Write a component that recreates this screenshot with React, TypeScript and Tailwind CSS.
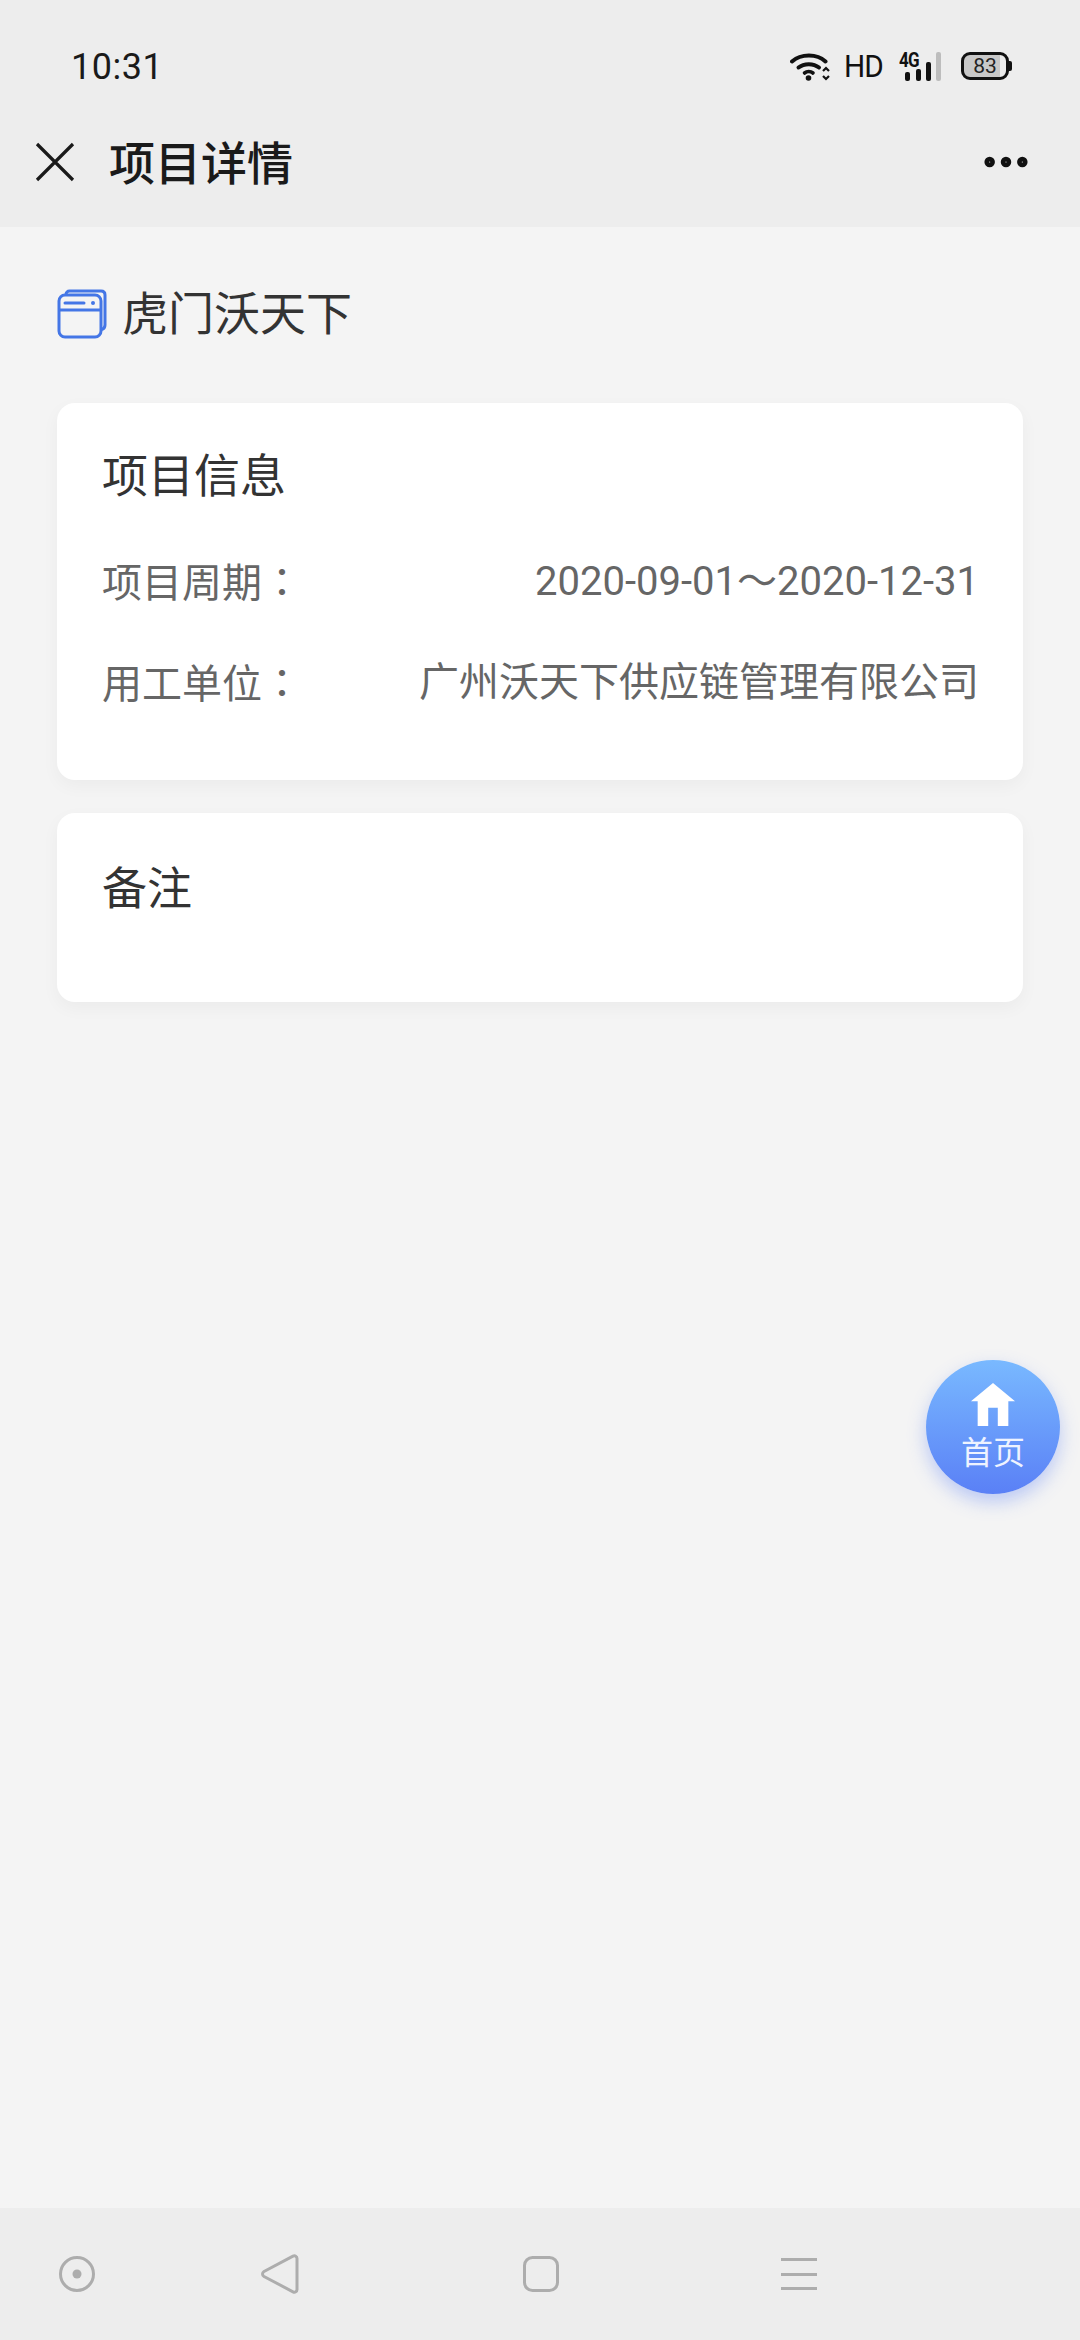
import { MoreHorizontal } from "lucide-react";

const cjk = "font-['Roboto','Noto_Sans_CJK_SC',sans-serif]";

function StatusBar() {
  return (
    <div className="flex h-[89px] items-end justify-between pb-[4px] pl-[71px] pr-[68px]">
      <span className="text-[36px] leading-[36px] tracking-[0.5px] text-[#1a1a1a]">10:31</span>
      <div className="mb-[3px] flex items-center">
        <svg width="42" height="30" viewBox="0 0 42 30" fill="none">
          <path d="M2 10.5C11 2.5 27 2.5 35.5 10.5" stroke="#111" strokeWidth="4" strokeLinecap="round" />
          <path d="M8.5 16.5C14 12 23.5 12 29 16.5" stroke="#111" strokeWidth="4" strokeLinecap="round" />
          <path d="M14.5 22C17 20 20.5 20 23 22" stroke="#111" strokeWidth="3.6" strokeLinecap="round" />
          <circle cx="18.5" cy="27" r="2.8" fill="#111" />
          <path d="M33 20L36 17L39 20M33 25L36 28L39 25" stroke="#111" strokeWidth="2.2" />
        </svg>
        <span className="ml-[12px] w-[38px] origin-left text-[32px] leading-[32px] tracking-[-1px] text-[#111] font-['Roboto',sans-serif] [transform:scaleX(0.93)]">HD</span>
        <div className="relative ml-[17px] h-[30px] w-[44px]">
          <span className="absolute left-0 top-[-2px] origin-left text-[20px] font-bold leading-[22px] tracking-[-1px] text-[#111] [transform:scaleX(0.85)]">4G</span>
          <svg className="absolute left-0 top-0" width="44" height="30" viewBox="0 0 44 30">
            <rect x="6" y="21" width="5" height="9" rx="2" fill="#111" />
            <rect x="17" y="18" width="5" height="12" rx="2" fill="#111" />
            <rect x="27" y="11" width="5" height="19" rx="2" fill="#111" />
            <rect x="37" y="1" width="5" height="29" rx="2" fill="#bdbdbd" />
          </svg>
        </div>
        <div className="relative ml-[18px] flex h-[28px] w-[48px] items-center justify-center overflow-hidden rounded-[9px] border-[3px] border-[#111] bg-[linear-gradient(90deg,#c8c8c8_0,#c8c8c8_85%,#ececec_85%)]">
          <span className="text-[21px] leading-[22px] text-[#222] font-['Roboto',sans-serif]">83</span>
        </div>
        <div className="h-[10px] w-[3px] rounded-r-[2px] bg-[#111]" />
      </div>
    </div>
  );
}

function Header() {
  return (
    <div className="flex h-[138px] items-center justify-between bg-[#ededed] pl-[35px] pr-[46px] pt-[8px]">
      <div className="flex items-center">
        <svg width="40" height="40" viewBox="0 0 40 40" fill="none">
          <path d="M2 2L38 38M38 2L2 38" stroke="#1a1a1a" strokeWidth="3.2" />
        </svg>
        <span className="ml-[34px] mt-[3px] text-[46px] font-medium leading-[56px] text-[#1a1a1a]">项目详情</span>
      </div>
      <MoreHorizontal className="h-[56px] w-[56px] text-[#111]" strokeWidth={2.5} />
    </div>
  );
}

function ProjectIcon() {
  return (
    <svg width="50" height="50" viewBox="0 0 50 50" fill="none">
      <path d="M9 5.5C9 3.5 10.5 2 12.5 2H44C46.5 2 48 3.5 48 6V36C48 38.5 46.5 40 44.5 40.5" stroke="#4476e6" strokeWidth="3" />
      <rect x="2" y="6" width="42" height="42" rx="6" fill="#f4f4f4" stroke="#4476e6" strokeWidth="3" />
      <path d="M2 21H44" stroke="#4476e6" strokeWidth="3" />
      <path d="M8 14H27" stroke="#4476e6" strokeWidth="3" strokeLinecap="round" />
      <circle cx="36" cy="14" r="2" fill="#4476e6" />
    </svg>
  );
}

function InfoRow({ label, value, className }: { label: string; value: string; className?: string }) {
  return (
    <div className={`flex items-center justify-between text-[40px] leading-[50px] text-[#666] ${className ?? ""}`}>
      <span>
        {label}
        <span className="font-['Noto_Sans_CJK_TC',sans-serif]">：</span>
      </span>
      <span>{value}</span>
    </div>
  );
}

function BottomNav() {
  return (
    <div className="flex h-[132px] items-center bg-[#ededed] pl-[59px]">
      <svg width="36" height="36" viewBox="0 0 36 36" fill="none">
        <circle cx="18" cy="18" r="16.5" stroke="#adadad" strokeWidth="3" />
        <circle cx="18" cy="18" r="4.5" fill="#adadad" />
      </svg>
      <svg className="ml-[166px]" width="38" height="40" viewBox="0 0 38 40" fill="none">
        <path d="M3 17.5L32 2.2C34 1.2 36 2.5 36 4.5V35.5C36 37.5 34 38.8 32 37.8L3 22.5C1 21.2 1 18.8 3 17.5Z" stroke="#adadad" strokeWidth="3" strokeLinejoin="round" />
      </svg>
      <svg className="ml-[224px]" width="36" height="36" viewBox="0 0 36 36" fill="none">
        <rect x="1.5" y="1.5" width="33" height="33" rx="8" stroke="#adadad" strokeWidth="3" />
      </svg>
      <div className="ml-[222px] flex h-[36px] w-[36px] flex-col justify-between py-[2px]">
        <div className="h-[3px] bg-[#adadad]" />
        <div className="h-[3px] bg-[#adadad]" />
        <div className="h-[3px] bg-[#adadad]" />
      </div>
    </div>
  );
}

export default function App() {
  return (
    <div className={`relative flex h-[2340px] w-[1080px] flex-col overflow-hidden bg-[#f4f4f4] ${cjk}`}>
      <div className="bg-[#ededed]">
        <StatusBar />
        <Header />
      </div>

      <main className="flex-1 px-[57px]">
        <div className="mt-[59px] flex items-center">
          <ProjectIcon />
          <span className="ml-[15px] text-[46px] font-normal leading-[56px] text-[#333]">虎门沃天下</span>
        </div>

        <section className="mt-[61px] h-[377px] rounded-[18px] bg-white pl-[45px] pr-[44px] pt-[45px] shadow-[0_6px_18px_rgba(0,0,0,0.04)]">
          <h2 className="text-[46px] font-normal leading-[56px] text-[#333]">项目信息</h2>
          <InfoRow className="mt-[51px]" label="项目周期" value="2020-09-01～2020-12-31" />
          <InfoRow className="mt-[47px]" label="用工单位" value="广州沃天下供应链管理有限公司" />
        </section>

        <section className="mt-[33px] h-[189px] rounded-[18px] bg-white pl-[45px] pr-[44px] pt-[49px] shadow-[0_6px_18px_rgba(0,0,0,0.04)]">
          <h2 className="text-[45px] font-normal leading-[56px] text-[#333]">备注</h2>
        </section>
      </main>

      <BottomNav />

      <div className="absolute left-[926px] top-[1360px] flex h-[134px] w-[134px] flex-col items-center rounded-full bg-[linear-gradient(180deg,#79b9ff,#5a80f6)] pt-[21px] shadow-[0_8px_18px_rgba(80,120,245,0.35)]">
        <svg width="46" height="46" viewBox="0 0 48 46" fill="white">
          <path d="M24 1L47 20H40V46H29V27H19V46H8V20H1Z" />
        </svg>
        <span className="mt-[7px] text-[32px] leading-[38px] text-[#eef3ff]">首页</span>
      </div>
    </div>
  );
}
